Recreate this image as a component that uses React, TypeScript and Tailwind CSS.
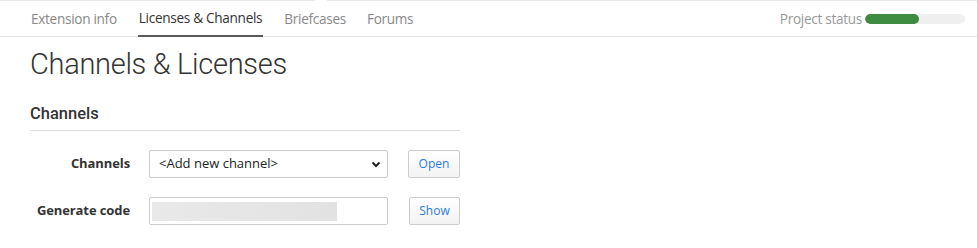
import React from 'react';

const tabs = ['Extension info', 'Licenses & Channels', 'Briefcases', 'Forums'];

const App: React.FC = () => {
  return (
    <div className="w-[977px] h-[248px] bg-white overflow-hidden" style={{ fontFamily: '"Open Sans", "Noto Sans", sans-serif' }}>
      <div className="flex h-px">
        <div className="w-[315px] bg-[#ebebeb]" />
        <div className="w-[12px]" />
        <div className="flex-1 bg-[#ebebeb]" />
      </div>
      <div className="flex items-stretch justify-between h-[36px] border-b border-[#e5e5e5] pl-[31px] pr-[12px]">
        <div className="flex gap-[21px] text-[13.6px] tracking-[-0.3px]">
          {tabs.map((t, i) => (
            <div
              key={t}
              className={
                i === 1
                  ? 'flex items-center pt-px text-[#333] border-b-2 border-[#5a5a5a] -mb-px px-px'
                  : 'flex items-center pt-px text-[#888]'
              }
            >
              {t}
            </div>
          ))}
        </div>
        <div className="flex items-center gap-[3px] pt-px">
          <span className="text-[13.6px] text-[#999] tracking-[-0.3px]">Project status</span>
          <div className="w-[100px] h-[10px] rounded-full bg-[#efefef] overflow-hidden">
            <div className="h-full w-[54px] rounded-full bg-[#3e8b42]" />
          </div>
        </div>
      </div>

      <div className="pl-[30px]">
        <h1 className="mt-[9px] text-[29px] leading-[36px] font-light text-[#333] tracking-[-0.3px]" style={{ fontFamily: 'Roboto, sans-serif' }}>
          Channels &amp; Licenses
        </h1>
        <div className="w-[430px] mt-[22px] border-b border-[#dedede] pb-[6px]">
          <h2 className="text-[16.5px] leading-[20px] font-medium text-[#333]" style={{ fontFamily: 'Roboto, sans-serif' }}>Channels</h2>
        </div>

        <div className="mt-[19px] flex flex-col gap-[19px] text-[13px]">
          <div className="flex items-center">
            <label className="w-[100px] text-right font-bold text-[#333] tracking-[-0.1px]">Channels</label>
            <div className="ml-[19px] w-[239px] h-[28px] border border-[#ccc] rounded-[2px] flex items-center justify-between px-[9px] text-[13px] text-[#222]">
              <span>&lt;Add new channel&gt;</span>
              <svg width="10" height="7" viewBox="0 0 10 7" className="mr-[-3px]">
                <path d="M1.5 1.5 L5 5 L8.5 1.5" stroke="#222" strokeWidth="2" fill="none" />
              </svg>
            </div>
            <button className="ml-[20px] w-[52px] h-[28px] border border-[#ccc] rounded-[2px] bg-gradient-to-b from-white to-[#f3f3f3] text-[12px] text-[#2a7ae2]">
              Open
            </button>
          </div>
          <div className="flex items-center">
            <label className="w-[100px] text-right font-bold text-[#333] tracking-[-0.1px]">Generate code</label>
            <div className="ml-[19px] w-[239px] h-[28px] border border-[#ccc] rounded-[2px] flex items-center px-[2px]">
              <div className="w-[185px] h-[19px] bg-gradient-to-r from-[#e9e9e9] to-[#e2e2e2]" />
            </div>
            <button className="ml-[21px] w-[51px] h-[28px] border border-[#ccc] rounded-[2px] bg-gradient-to-b from-white to-[#f3f3f3] text-[12px] text-[#2a7ae2]">
              Show
            </button>
          </div>
        </div>
      </div>
    </div>
  );
};

export default App;
